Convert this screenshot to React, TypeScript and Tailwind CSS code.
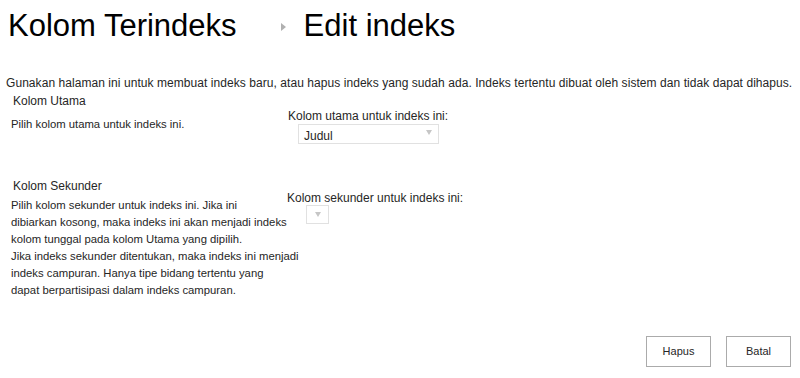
export default function App() {
  const body = { fontFamily: '"Segoe UI", "Liberation Sans", Arial, sans-serif' }
  return (
    <div className="w-[800px] h-[378px] bg-white text-[#262626] overflow-hidden" style={body}>
      {/* Titel */}
      <div className="flex items-center pl-[8px] pt-[6px] h-[44px]" style={{ fontFamily: '"Liberation Sans", Arial, sans-serif' }}>
        <h1 className="text-[31px] leading-none text-black">Kolom Terindeks</h1>
        <span className="ml-[44px] mr-[18px] w-0 h-0 border-y-[4px] border-y-transparent border-l-[5px] border-l-[#b0b0b0] mt-[4px]" />
        <h1 className="text-[31px] leading-none text-black">Edit indeks</h1>
      </div>

      <p className="mt-[31px] pl-[6px] text-[12px] leading-[16px] tracking-[0.06px] whitespace-nowrap">
        Gunakan halaman ini untuk membuat indeks baru, atau hapus indeks yang sudah ada. Indeks tertentu dibuat oleh sistem dan tidak dapat dihapus.
      </p>

      {/* Kolom Utama */}
      <div className="flex mt-[2px]">
        <div className="w-[280px] shrink-0">
          <div className="pl-[13px] text-[12px] leading-[16px]">Kolom Utama</div>
          <div className="pl-[11px] mt-[7px] text-[11.3px] leading-[16px]">Pilih kolom utama untuk indeks ini.</div>
        </div>
        <div className="pt-[15px] pl-[8px]">
          <div className="text-[12px] leading-[16px]">Kolom utama untuk indeks ini:</div>
          <div className="ml-[10px] w-[141px] h-[20px] border border-[#e1e1e1] flex items-center justify-between pl-[5px] pr-[6px]">
            <span className="text-[12px] leading-none mt-[3px]">Judul</span>
            <span className="w-0 h-0 border-x-[3px] border-x-transparent border-t-[5px] border-t-[#c6c6c6] -mt-[4px]" />
          </div>
        </div>
      </div>

      {/* Kolom Sekunder */}
      <div className="flex mt-[34px]">
        <div className="w-[280px] shrink-0">
          <div className="pl-[13px] text-[12px] leading-[16px]">Kolom Sekunder</div>
          <div className="pl-[11px] mt-[3px] text-[11.3px] leading-[17px] whitespace-nowrap">
            Pilih kolom sekunder untuk indeks ini. Jika ini<br />
            dibiarkan kosong, maka indeks ini akan menjadi indeks<br />
            kolom tunggal pada kolom Utama yang dipilih.<br />
            Jika indeks sekunder ditentukan, maka indeks ini menjadi<br />
            indeks campuran. Hanya tipe bidang tertentu yang<br />
            dapat berpartisipasi dalam indeks campuran.
          </div>
        </div>
        <div className="pt-[12px] pl-[7px]">
          <div className="text-[12px] leading-[16px]">Kolom sekunder untuk indeks ini:</div>
          <div className="ml-[19px] -mt-[1px] w-[23px] h-[19px] border border-[#e1e1e1] flex items-start justify-center pt-[6px]">
            <span className="w-0 h-0 border-x-[3px] border-x-transparent border-t-[5px] border-t-[#c6c6c6]" />
          </div>
        </div>
      </div>

      {/* Tombol */}
      <div className="flex justify-end gap-[15px] pr-[9px] mt-[37px]">
        <button className="w-[65px] h-[31px] border border-[#ababab] bg-white text-[11px] text-[#262626]">Hapus</button>
        <button className="w-[65px] h-[31px] border border-[#ababab] bg-white text-[11px] text-[#262626]">Batal</button>
      </div>
    </div>
  )
}
